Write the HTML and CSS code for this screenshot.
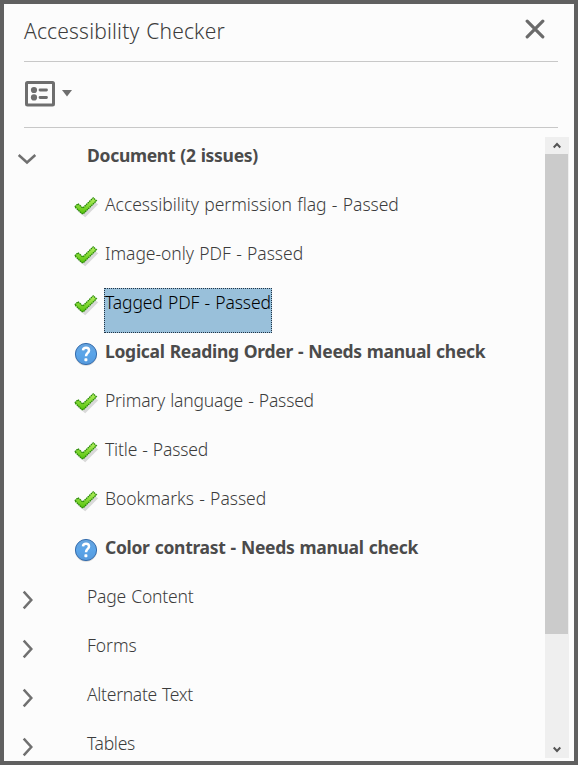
FILE: index.html
```
<!DOCTYPE html>
<html lang="en">
<head>
<meta charset="utf-8">
<title>Accessibility Checker</title>
<link rel="stylesheet" href="styles.css">
</head>
<body>
<svg width="0" height="0" class="defs" aria-hidden="true">
  <defs>
    <linearGradient id="green" x1="0" y1="0" x2="0" y2="1"><stop offset="0" stop-color="#b5f060"/><stop offset="1" stop-color="#55c30c"/></linearGradient>
    <linearGradient id="blue" x1="0" y1="0" x2="0" y2="1"><stop offset="0" stop-color="#65a2dc"/><stop offset=".5" stop-color="#5ba5e9"/><stop offset="1" stop-color="#5599dc"/></linearGradient>
    <symbol id="check" viewBox="0 0 26 24">
      <path d="M3 13.5L6 10.5L10.5 14.5L20.5 5L24.5 7.5L11.5 20.5Z" fill="#999" opacity=".35" transform="translate(.7 1.8)"/>
      <path d="M1.8 11.8L5 8.8L9.8 13L20.2 2.8L23.4 5.8L10.3 18.7H9Z" fill="url(#green)" stroke="#2b8c08" stroke-width="1.3" stroke-dasharray="1.6 .6"/>
    </symbol>
    <symbol id="help" viewBox="0 0 26 26">
      <circle cx="13" cy="13.8" r="11" fill="#bbb" opacity=".6"/>
      <circle cx="13" cy="13" r="10.6" fill="url(#blue)" stroke="#376eae" stroke-width="1"/>
      <path d="M10 9.4C10.3 5.9 16 6.1 16 9.4C16 12 13 11.8 13 15.2" fill="none" stroke="#fff" stroke-width="2.5"/>
      <rect x="11.4" y="17.2" width="3" height="3" rx=".8" fill="#fff"/>
    </symbol>
    <symbol id="right" viewBox="0 0 12 20"><path d="M1.7 1.7L9.3 10L1.7 18.3" fill="none" stroke="#707070" stroke-width="2.5"/></symbol>
    <symbol id="down" viewBox="0 0 20 12"><path d="M1.7 2L10 9.5L18.3 2" fill="none" stroke="#707070" stroke-width="2.5"/></symbol>
  </defs>
</svg>
<main class="panel">
  <header class="header">
    <h1 class="title"><span>Accessibility Checker</span></h1>
    <svg class="close" width="20" height="20" viewBox="0 0 20 20"><path d="M2.2 2.2L17.8 17.8M17.8 2.2L2.2 17.8" stroke="#6b6b6b" stroke-width="3.2" stroke-linecap="round"/></svg>
  </header>
  <div class="toolbar">
    <svg width="30" height="26" viewBox="0 0 30 26"><rect x="1.5" y="1.5" width="27" height="22.6" rx="1" fill="none" stroke="#6e6e6e" stroke-width="3"/><circle cx="9" cy="9" r="3.1" fill="#6e6e6e"/><circle cx="9" cy="16.4" r="3.1" fill="#6e6e6e"/><path d="M15 9H21.5M15 16.5H21.5" stroke="#6e6e6e" stroke-width="2.8" stroke-linecap="round"/></svg>
    <svg class="caret" width="10" height="7" viewBox="0 0 10 7"><path d="M0 0H10L5 6.5Z" fill="#6e6e6e"/></svg>
  </div>
  <div class="body">
    <ul class="tree">
      <li class="row group open"><svg class="arrow" width="20" height="12"><use href="#down"/></svg><b class="label">Document (2 issues)</b></li>
      <li class="row"><svg class="icon" width="26" height="24"><use href="#check"/></svg><span class="label">Accessibility permission flag - Passed</span></li>
      <li class="row"><svg class="icon" width="26" height="24"><use href="#check"/></svg><span class="label">Image-only PDF - Passed</span></li>
      <li class="row"><svg class="icon" width="26" height="24"><use href="#check"/></svg><span class="label selected">Tagged PDF - Passed</span></li>
      <li class="row"><svg class="icon help" width="26" height="26"><use href="#help"/></svg><b class="label">Logical Reading Order - Needs manual check</b></li>
      <li class="row"><svg class="icon" width="26" height="24"><use href="#check"/></svg><span class="label tight">Primary language - Passed</span></li>
      <li class="row"><svg class="icon" width="26" height="24"><use href="#check"/></svg><span class="label tight">Title - Passed</span></li>
      <li class="row"><svg class="icon" width="26" height="24"><use href="#check"/></svg><span class="label">Bookmarks - Passed</span></li>
      <li class="row"><svg class="icon help" width="26" height="26"><use href="#help"/></svg><b class="label">Color contrast - Needs manual check</b></li>
      <li class="row group"><svg class="arrow" width="12" height="20"><use href="#right"/></svg><span class="label tight">Page Content</span></li>
      <li class="row group"><svg class="arrow" width="12" height="20"><use href="#right"/></svg><span class="label">Forms</span></li>
      <li class="row group"><svg class="arrow" width="12" height="20"><use href="#right"/></svg><span class="label tighter">Alternate Text</span></li>
      <li class="row group"><svg class="arrow" width="12" height="20"><use href="#right"/></svg><span class="label tighter">Tables</span></li>
    </ul>
    <div class="scrollbar">
      <div class="button"><svg width="8" height="7" viewBox="0 0 8 7"><path d="M.7 5.5L4 2L7.3 5.5" fill="none" stroke="#555" stroke-width="2"/></svg></div>
      <div class="thumb"></div>
      <div class="button end"><svg width="8" height="7" viewBox="0 0 8 7"><path d="M.7 1.5L4 5L7.3 1.5" fill="none" stroke="#555" stroke-width="2"/></svg></div>
    </div>
  </div>
</main>
</body>
</html>
```
FILE: styles.css
```
* { box-sizing: border-box; }
body { margin: 0; font-family: "Noto Sans", sans-serif; font-weight: 350; color: #3c3c3c; }
svg { display: block; flex: none; }
.defs { position: absolute; }
.panel { width: 578px; height: 765px; border: 4px solid #606060; background: #fcfcfc; overflow: hidden; display: flex; flex-direction: column; }
.header { height: 58px; flex: none; margin: 0 16px 0 20px; border-bottom: 1px solid #c8c8c8; display: flex; justify-content: space-between; }
.title { margin: 0; font-size: 21px; line-height: 30px; font-weight: 350; padding-top: 12px; white-space: nowrap; letter-spacing: 0.18px; word-spacing: 1px; }
.close { margin: 15px 13px 0 0; }
.toolbar { height: 66px; flex: none; margin: 0 16px 0 20px; border-bottom: 1px solid #c8c8c8; display: flex; padding: 19px 0 0 1px; }
.caret { margin: 9px 0 0 7px; }
.body { flex: 1; min-height: 0; display: flex; justify-content: space-between; padding: 9px 5px 3px 0; }
.tree { list-style: none; margin: 0; padding: 4px 0 0; height: 624px; overflow: hidden; }
.row { display: flex; height: 49px; padding-left: 69px; font-size: 17.5px; line-height: 26px; white-space: nowrap; letter-spacing: -0.03px; word-spacing: 0.8px; }
b { font-weight: 700; letter-spacing: -0.3px; color: #4b4b4b; }
.icon { margin-top: 5px; }
.icon.help { margin-top: 4px; }
.label { margin-left: 5px; padding-left: 1px; height: 45px; border: 1px solid transparent; display: block; }
.icon + .label { padding-left: 0; }
.tight { letter-spacing: -0.19px; }
.tighter { letter-spacing: -0.3px; }
.selected { background: #99c0da; border: 1px dotted #234; color: #000; letter-spacing: -0.11px; }
.group { padding-left: 18px; }
.group .arrow { margin: 8px 0 0; }
.group .label { margin-left: 51px; }
.open { padding-left: 13px; }
.open .arrow { margin-top: 12px; }
.open .label { margin-left: 48px; }
.scrollbar { width: 24px; background: #efefef; display: flex; flex-direction: column; }
.button { height: 17px; display: flex; justify-content: center; align-items: center; }
.thumb { width: 23px; height: 480px; background: #cbcbcb; }
.end { margin-top: auto; }
```
